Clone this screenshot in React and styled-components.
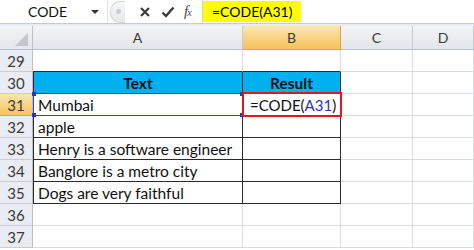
import React from "react";
import styled, { createGlobalStyle } from "styled-components";

const Global = createGlobalStyle`
  html, body { margin: 0; padding: 0; background: #ffffff; }
  body { font-family: Lato, "Liberation Sans", sans-serif; }
`;

const Page = styled.div`
  width: 474px;
  height: 250px;
  overflow: hidden;
  background: #ffffff;
`;

const FormulaBar = styled.div`
  height: 23px;
  display: flex;
  align-items: center;
  border-bottom: 1px solid #c6cbd1;
  background: #ffffff;
`;

const NameBox = styled.div`
  width: 108px;
  height: 100%;
  display: flex;
  align-items: center;
  justify-content: space-between;
  padding: 0 8px 0 28px;
  box-sizing: border-box;
  font-size: 14px;
  color: #111;
  border-right: 1px solid #e1e4e8;
`;

const Arrow = styled.span`
  width: 0;
  height: 0;
  border-left: 4px solid transparent;
  border-right: 4px solid transparent;
  border-top: 4px solid #333;
`;

const Grip = styled.div`
  width: 14px;
  height: 20px;
  margin-left: 2px;
  border-radius: 10px 0 0 10px;
  border: 1px solid #d3d6da;
  border-right: none;
  background: linear-gradient(#f7f7f7, #e6e8eb);
  display: flex;
  align-items: center;
  justify-content: center;
  &::after {
    content: "";
    width: 5px;
    height: 5px;
    border-radius: 50%;
    background: #c9ccd0;
  }
`;

const Tools = styled.div`
  display: flex;
  align-items: center;
  gap: 9px;
  padding-left: 13px;
  width: 64px;
  height: 100%;
`;

const Fx = styled.span`
  font-family: "Liberation Serif", serif;
  font-style: italic;
  font-size: 15px;
  color: #444;
  letter-spacing: -1px;
  small { font-size: 10px; }
`;

const FormulaInput = styled.div`
  flex: 1;
  height: 100%;
  display: flex;
  align-items: center;
  border-left: 1px solid #d0d4d9;
`;

const Highlight = styled.span`
  background: #ffff00;
  height: 21px;
  display: flex;
  align-items: center;
  padding: 0 9px 0 9px;
  font-size: 14px;
  color: #000;
`;

const Gap = styled.div`
  height: 2px;
  background: #e9ecf0;
`;

const Sheet = styled.div`
  display: grid;
  grid-template-columns: 33px 210px 98px 72px 1fr;
  grid-template-rows: 24px repeat(9, 22px);
`;

const Corner = styled.div`
  background: linear-gradient(#f3f4f6, #e3e6ea);
  border-right: 1px solid #b9c0c8;
  border-bottom: 1px solid #b9c0c8;
  position: relative;
  &::after {
    content: "";
    position: absolute;
    right: 4px;
    bottom: 3px;
    border-left: 13px solid transparent;
    border-bottom: 13px solid #c3c7cc;
  }
`;

const ColHead = styled.div`
  display: flex;
  align-items: center;
  justify-content: center;
  font-size: 14px;
  color: #3b3b3b;
  background: ${(p) =>
    p.$active ? "linear-gradient(#fbe6b0, #f6c25c)" : "linear-gradient(#f3f4f6, #e2e5e9)"};
  border-right: 1px solid ${(p) => (p.$active ? "#d9a83f" : "#c5cbd2")};
  border-bottom: 1px solid ${(p) => (p.$active ? "#d9a83f" : "#b9c0c8")};
`;

const RowHead = styled.div`
  display: flex;
  align-items: center;
  justify-content: center;
  font-size: 15px;
  color: #3b3b3b;
  background: ${(p) =>
    p.$active ? "linear-gradient(#fbe6b0, #f6c25c)" : "#e9ecf0"};
  border-right: 1px solid #b9c0c8;
  border-bottom: 1px solid ${(p) => (p.$active ? "#d9a83f" : "#c9ced4")};
`;

const Cell = styled.div`
  position: relative;
  display: flex;
  align-items: center;
  justify-content: ${(p) => (p.$center ? "center" : "flex-start")};
  padding: 0 4px;
  font-size: 15.5px;
  font-weight: ${(p) => (p.$bold ? 700 : 400)};
  color: #111;
  background: ${(p) => p.$fill || "#ffffff"};
  border-right: 1px solid ${(p) => (p.$table ? "#2b2b2b" : "#dadcdf")};
  border-bottom: 1px solid ${(p) => (p.$table || p.$above ? "#2b2b2b" : "#dadcdf")};
  border-left: ${(p) => (p.$first ? "1px solid #2b2b2b" : "none")};
  z-index: ${(p) => (p.$raised ? 2 : "auto")};
  white-space: nowrap;
`;

const RefBox = styled.div`
  position: absolute;
  left: -1px;
  right: -1px;
  top: -1px;
  bottom: -1px;
  border: 1px solid #3a3ae0;
  pointer-events: none;
`;

const Handle = styled.span`
  position: absolute;
  width: 4px;
  height: 4px;
  background: #2f2fd8;
  ${(p) => (p.$top ? "top: -2px;" : "bottom: -2px;")}
  ${(p) => (p.$left ? "left: -2px;" : "right: -2px;")}
`;

const EditBox = styled.div`
  position: absolute;
  left: -1px;
  right: -2px;
  top: -2px;
  bottom: -2px;
  border: 2px solid #e5161d;
  pointer-events: none;
`;

const EditText = styled.span`
  padding-left: 3px;
  font-size: 15px;
`;

const Ref = styled.span`
  color: #3232c8;
`;

const Caret = styled.span`
  display: inline-block;
  width: 1px;
  height: 17px;
  background: #000;
  margin-left: 2px;
`;

const Icon = ({ children }) => (
  <svg width="14" height="14" viewBox="0 0 14 14" fill="none">
    {children}
  </svg>
);

const rows = [
  { n: 29, a: "", b: "" },
  { n: 30, head: true },
  { n: 31, a: "Mumbai", edit: true },
  { n: 32, a: "apple" },
  { n: 33, a: "Henry is a software engineer" },
  { n: 34, a: "Banglore is a metro city" },
  { n: 35, a: "Dogs are very faithful" },
  { n: 36 },
  { n: 37 },
];

export default function App() {
  return (
    <Page>
      <Global />
      <FormulaBar>
        <NameBox>
          CODE
          <Arrow />
        </NameBox>
        <Grip />
        <Tools>
          <Icon>
            <path d="M3 3 L11 11 M11 3 L3 11" stroke="#3c3c3c" strokeWidth="2.2" />
          </Icon>
          <Icon>
            <path d="M1.5 7.5 L5 11 L12.5 2.5" stroke="#3c3c3c" strokeWidth="2.4" />
          </Icon>
          <Fx>
            f<small>x</small>
          </Fx>
        </Tools>
        <FormulaInput>
          <Highlight>=CODE(A31)</Highlight>
        </FormulaInput>
      </FormulaBar>
      <Gap />
      <Sheet>
        <Corner />
        <ColHead>A</ColHead>
        <ColHead $active>B</ColHead>
        <ColHead>C</ColHead>
        <ColHead>D</ColHead>
        {rows.map((r) => {
          const inTable = r.n >= 30 && r.n <= 35;
          return (
            <React.Fragment key={r.n}>
              <RowHead $active={r.n === 31}>{r.n}</RowHead>
              {r.head ? (
                <>
                  <Cell $table $first $fill="#00b0f0" $center $bold>
                    Text
                  </Cell>
                  <Cell $table $fill="#00b0f0" $center $bold>
                    Result
                  </Cell>
                </>
              ) : (
                <>
                  <Cell
                    $table={inTable}
                    $first={inTable}
                    $above={r.n === 29}
                    $raised={r.edit}
                  >
                    {r.a}
                    {r.edit && (
                      <RefBox>
                        <Handle $top $left />
                        <Handle $left />
                        <Handle $top />
                        <Handle />
                      </RefBox>
                    )}
                  </Cell>
                  <Cell $table={inTable} $above={r.n === 29} $raised={r.edit}>
                    {r.edit && (
                      <>
                        <EditText>
                          =CODE(<Ref>A31</Ref>)
                        </EditText>
                        <Caret />
                        <EditBox />
                      </>
                    )}
                  </Cell>
                </>
              )}
              <Cell />
              <Cell />
            </React.Fragment>
          );
        })}
      </Sheet>
    </Page>
  );
}
